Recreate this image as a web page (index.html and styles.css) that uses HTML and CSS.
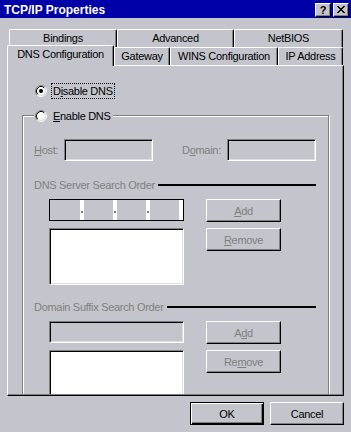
FILE: index.html
```html
<!DOCTYPE html>
<html>
<head>
<meta charset="utf-8">
<title>TCP/IP Properties</title>
<link rel="stylesheet" href="styles.css">
</head>
<body>
<div class="dialog">
  <div class="titlebar">
    <span class="title">TCP/IP Properties</span>
    <div class="caption-btns">
      <div class="cap-btn help">?</div>
      <div class="cap-btn close">
        <svg width="8" height="7" viewBox="0 0 8 7" shape-rendering="crispEdges"><path fill="#000" d="M0 0h2v1H0zM6 0h2v1H6zM1 1h2v1H1zM5 1h2v1H5zM2 2h4v1H2zM3 3h2v1H3zM2 4h4v1H2zM1 5h2v1H1zM5 5h2v1H5zM0 6h2v1H0zM6 6h2v1H6z"/></svg>
      </div>
    </div>
  </div>

  <div class="tabstrip">
    <div class="tab-row back">
      <div class="tab t-bind">Bindings</div>
      <div class="tab t-adv">Advanced</div>
      <div class="tab t-nb">NetBIOS</div>
    </div>
    <div class="tab-row front">
      <div class="tab selected t-dns">DNS Configuration</div>
      <div class="tab t-gw">Gateway</div>
      <div class="tab t-wins">WINS Configuration</div>
      <div class="tab t-ip">IP Address</div>
    </div>
  </div>

  <div class="panel">
    <div class="panel-inner">
      <div class="radio-row disable-row">
        <svg class="radio" width="12" height="12" viewBox="0 0 12 12">
          <circle cx="6" cy="6" r="4.2" fill="#fff"/>
          <path d="M2.11 9.89A5.5 5.5 0 0 1 9.89 2.11" fill="none" stroke="#808080"/>
          <path d="M9.89 2.11A5.5 5.5 0 0 1 2.11 9.89" fill="none" stroke="#fff"/>
          <path d="M2.82 9.18A4.5 4.5 0 0 1 9.18 2.82" fill="none" stroke="#000"/>
          <path d="M9.18 2.82A4.5 4.5 0 0 1 2.82 9.18" fill="none" stroke="#dfdfdf"/>
          <circle cx="6" cy="6" r="2" fill="#000"/>
        </svg>
        <span class="radio-label focus">D<u>i</u>sable DNS</span>
      </div>

      <div class="group">
        <div class="legend">
          <svg class="radio" width="12" height="12" viewBox="0 0 12 12">
            <circle cx="6" cy="6" r="4.2" fill="#fff"/>
            <path d="M2.11 9.89A5.5 5.5 0 0 1 9.89 2.11" fill="none" stroke="#808080"/>
            <path d="M9.89 2.11A5.5 5.5 0 0 1 2.11 9.89" fill="none" stroke="#fff"/>
            <path d="M2.82 9.18A4.5 4.5 0 0 1 9.18 2.82" fill="none" stroke="#000"/>
            <path d="M9.18 2.82A4.5 4.5 0 0 1 2.82 9.18" fill="none" stroke="#dfdfdf"/>
          </svg>
          <span class="radio-label"><u>E</u>nable DNS</span>
        </div>

        <div class="host-row">
          <span class="lbl lbl-host"><u>H</u>ost:</span>
          <div class="edit w89"></div>
          <span class="lbl lbl-domain">D<u>o</u>main:</span>
          <div class="edit w89"></div>
        </div>

        <div class="section">
          <span class="lbl">DNS Server Search Order</span>
          <span class="rule"></span>
        </div>

        <div class="block">
          <div class="col-left">
            <div class="ip">
              <span class="ip-seg first"></span><span class="ip-sep"></span>
              <span class="ip-seg"></span><span class="ip-sep"></span>
              <span class="ip-seg"></span><span class="ip-sep"></span>
              <span class="ip-seg"></span><span class="ip-end"></span>
            </div>
            <div class="listbox list1"></div>
          </div>
          <div class="col-right">
            <div class="btn disabled"><span><u>A</u>dd</span></div>
            <div class="btn disabled second"><span><u>R</u>emove</span></div>
          </div>
        </div>

        <div class="section">
          <span class="lbl">Domain Suffix Search Order</span>
          <span class="rule"></span>
        </div>

        <div class="block">
          <div class="col-left">
            <div class="edit w135"></div>
            <div class="listbox list2"></div>
          </div>
          <div class="col-right">
            <div class="btn disabled"><span>A<u>d</u>d</span></div>
            <div class="btn disabled second"><span>Re<u>m</u>ove</span></div>
          </div>
        </div>
      </div>
    </div>
  </div>

  <div class="footer">
    <div class="btn default">OK</div>
    <div class="btn">Cancel</div>
  </div>
</div>
</body>
</html>
```

FILE: styles.css
```css
* {
  box-sizing: border-box;
}

html, body {
  margin: 0;
  padding: 0;
}

body {
  background: #c4c4cc;
  font-family: "Liberation Sans", Arial, sans-serif;
  font-size: 11px;
  letter-spacing: -0.3px;
  color: #000;
}

.dialog {
  width: 351px;
  height: 432px;
  overflow: hidden;
}

/* ---------- title bar ---------- */
.titlebar {
  height: 18px;
  background: #0000a8;
  display: flex;
  justify-content: space-between;
  align-items: flex-start;
  padding: 0 2px 0 4px;
}

.title {
  color: #fff;
  font-weight: bold;
  font-size: 12px;
  letter-spacing: 0;
  line-height: 18px;
  padding-top: 1px;
}

.caption-btns {
  display: flex;
  gap: 2px;
  margin-top: 3px;
}

.cap-btn {
  width: 16px;
  height: 14px;
  background: #c4c4cc;
  border: 1px solid;
  border-color: #fff #000 #000 #fff;
  box-shadow: inset -1px -1px 0 #808080;
  display: flex;
  align-items: center;
  justify-content: center;
}

.cap-btn.help {
  font-weight: bold;
  font-size: 11px;
  line-height: 12px;
  letter-spacing: 0;
  padding-bottom: 1px;
}

.cap-btn.close svg {
  display: block;
  margin-bottom: 1px;
}

/* ---------- tabs ---------- */
.tabstrip {
  margin-top: 11px;
}

.tab-row {
  display: flex;
  height: 18px;
}

.tab-row.back {
  margin-left: 9px;
}

.tab-row.front {
  margin-left: 7px;
  align-items: flex-end;
}

.tab {
  height: 18px;
  border-top: 1px solid #fff;
  border-left: 1px solid #fff;
  border-right: 1px solid #000;
  border-radius: 2px 2px 0 0;
  box-shadow: inset -1px 0 0 #808080;
  background: #c4c4cc;
  text-align: center;
  line-height: 16px;
  white-space: nowrap;
}

.tab.selected {
  height: 21px;
  margin-bottom: -1px;
  position: relative;
  z-index: 2;
}

.t-bind { width: 108px; }
.t-adv { width: 117px; }
.t-nb { width: 109px; }
.t-dns { width: 107px; }
.t-gw { width: 56px; }
.t-wins { width: 108px; }
.t-ip { width: 65px; }

/* ---------- panel ---------- */
.panel {
  margin-left: 7px;
  width: 337px;
  height: 331px;
  border-top: 1px solid #fff;
  border-left: 1px solid #fff;
  border-right: 1px solid #000;
  border-bottom: 1px solid #000;
}

.panel-inner {
  height: 100%;
  border-right: 1px solid #808080;
  border-bottom: 1px solid #808080;
  overflow: hidden;
}

.radio-row {
  display: flex;
  align-items: center;
  height: 16px;
}

.disable-row {
  margin-top: 17px;
  padding-left: 27px;
}

.radio {
  display: block;
  flex: none;
}

.radio-label {
  margin-left: 4px;
  border: 1px solid transparent;
  padding: 0 1px;
  line-height: 14px;
  white-space: nowrap;
}

.radio-label.focus {
  border: 1px dotted #000;
}

/* ---------- group box ---------- */
.group {
  margin-top: 16px;
  margin-left: 14px;
  width: 307px;
  height: 320px;
  border: 1px solid #808080;
  box-shadow: inset 1px 1px 0 #fff, 1px 1px 0 #fff;
  padding: 0 12px 0 11px;
}

.legend {
  display: flex;
  align-items: center;
  height: 16px;
  width: max-content;
  margin-top: -8px;
  padding: 0 0 0 1px;
  background: #c4c4cc;
}

.lbl {
  color: #808080;
  white-space: nowrap;
}

.host-row {
  display: flex;
  align-items: center;
  height: 22px;
  margin-top: 15px;
}

.lbl-host {
  width: 30px;
}

.lbl-domain {
  width: 45px;
  margin-left: 29px;
}

.edit {
  height: 22px;
  border: 1px solid;
  border-color: #808080 #fff #fff #808080;
  box-shadow: inset 1px 1px 0 #000, inset -1px -1px 0 #dfdfdf;
  background: #c4c4cc;
}

.w89 { width: 89px; }
.w135 { width: 135px; }

.section {
  display: flex;
  align-items: center;
  gap: 3px;
  height: 14px;
  line-height: 13px;
  margin-top: 16px;
}

.section + .block {
  margin-top: 7px;
}

.block + .section {
  margin-top: 15px;
}

.host-row + .section {
  margin-top: 17px;
}

.rule {
  flex: 1;
  height: 2px;
  background: #000;
}

.block {
  display: flex;
}

.col-left {
  margin-left: 15px;
  width: 135px;
  display: flex;
  flex-direction: column;
  gap: 7px;
}

.col-right {
  margin-left: 22px;
  display: flex;
  flex-direction: column;
  gap: 6px;
}

/* IP address control */
.ip {
  display: flex;
  width: 135px;
  height: 22px;
  border: 1px solid #000;
  background: #c4c4cc;
}

.ip-seg {
  width: 29px;
}

.ip-seg.first {
  width: 30px;
}

.ip-sep,
.ip-end {
  width: 4px;
  background: #fff;
  display: flex;
  justify-content: center;
  align-items: flex-end;
  padding-bottom: 7px;
}

.ip-sep::after {
  content: "";
  width: 2px;
  height: 2px;
  background: #808080;
}

.listbox {
  width: 135px;
  border: 1px solid;
  border-color: #808080 #fff #fff #808080;
  box-shadow: inset 1px 1px 0 #000, inset -1px -1px 0 #dfdfdf;
  background: #fff;
}

.list1 { height: 57px; }
.list2 { height: 80px; }

/* ---------- buttons ---------- */
.btn {
  width: 75px;
  height: 23px;
  border: 1px solid;
  border-color: #fff #000 #000 #fff;
  box-shadow: inset -1px -1px 0 #808080;
  background: #c4c4cc;
  display: flex;
  align-items: center;
  justify-content: center;
  white-space: nowrap;
}

.btn.disabled {
  color: #808080;
}

.footer {
  display: flex;
  justify-content: flex-end;
  gap: 6px;
  padding-right: 7px;
  margin-top: 6px;
}

.footer .btn {
  width: 74px;
}

.btn.default {
  border-color: #000;
  box-shadow: inset 1px 1px 0 #fff, inset -1px -1px 0 #000, inset -2px -2px 0 #808080;
}
```
